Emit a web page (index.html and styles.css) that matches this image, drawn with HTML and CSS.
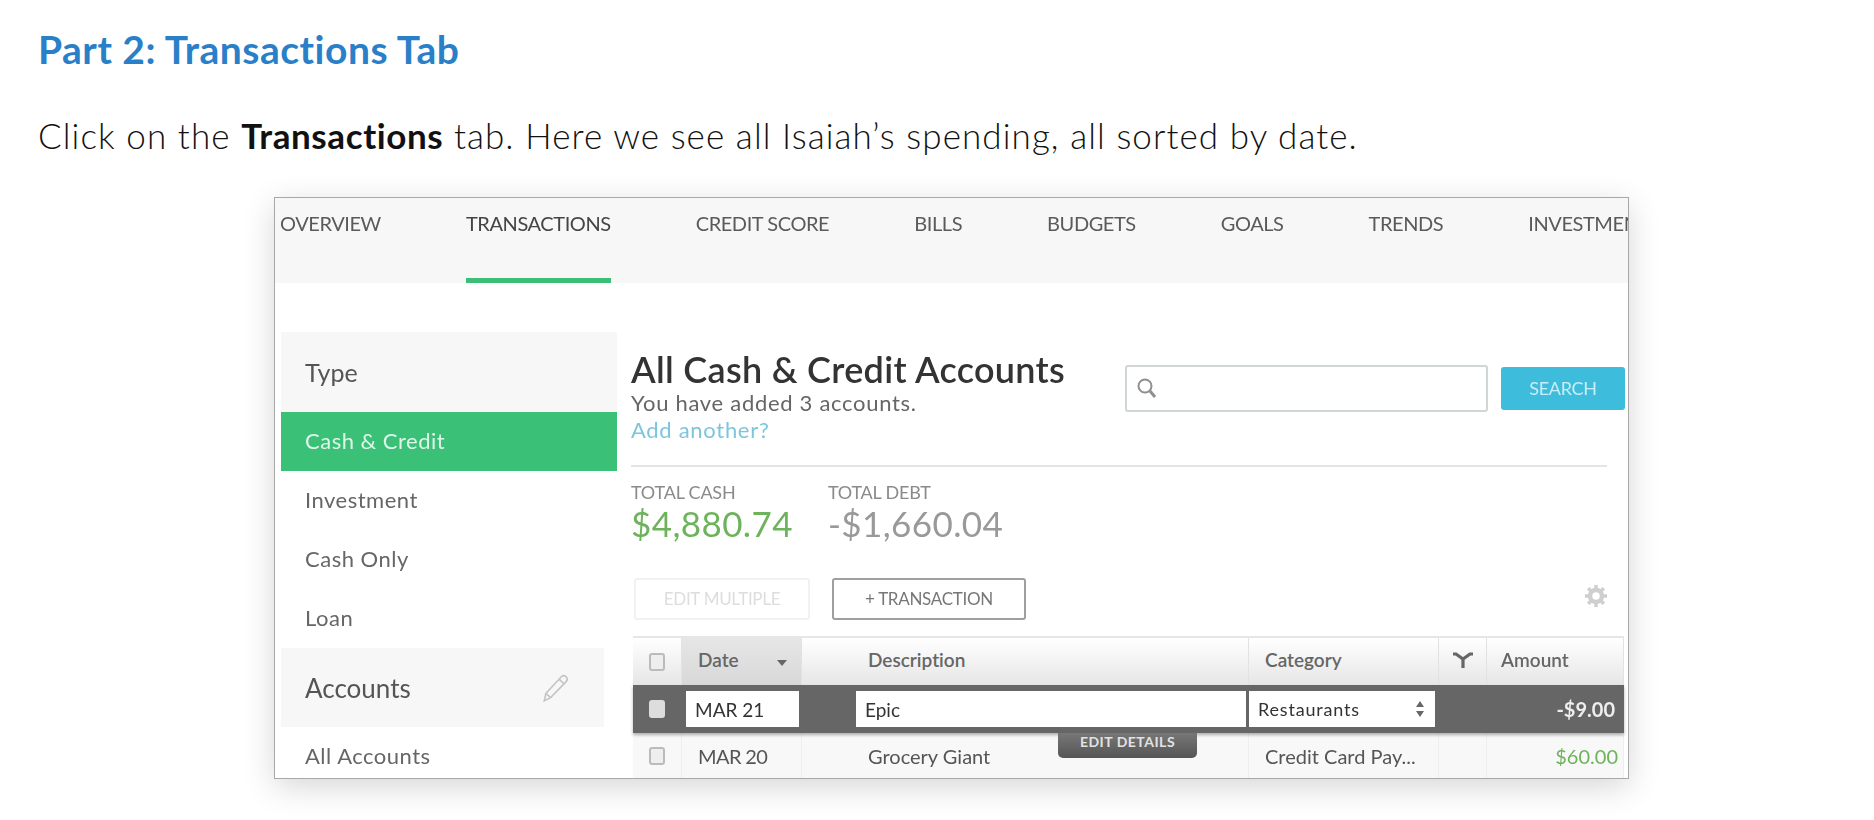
FILE: index.html
```html
<!DOCTYPE html>
<html lang="en">
<head>
    <meta charset="UTF-8">
    <title>Part 2: Transactions Tab</title>
    <link rel="stylesheet" href="styles.css">
</head>
<body>
    <h1 class="title">Part 2: Transactions Tab</h1>
    <p class="intro">Click on the <b>Transactions</b> tab. Here we see all Isaiah’s spending, all sorted by date.</p>

    <div class="shot">
        <div class="nav">
            <a>OVERVIEW</a>
            <a class="on">TRANSACTIONS</a>
            <a>CREDIT SCORE</a>
            <a>BILLS</a>
            <a>BUDGETS</a>
            <a>GOALS</a>
            <a>TRENDS</a>
            <a>INVESTMENTS</a>
        </div>

        <div class="body">
            <div class="side">
                <div class="side-head">Type</div>
                <div class="side-item ac">Cash &amp; Credit</div>
                <div class="side-item">Investment</div>
                <div class="side-item">Cash Only</div>
                <div class="side-item">Loan</div>
                <div class="side-head accounts">
                    Accounts
                    <svg class="pencil" width="32" height="32" viewBox="0 0 30 30" fill="none" stroke="#c4c4c4" stroke-width="1.5"><path d="M4 27l1.500-7L20 4.500c1.500-1.500 3-1.500 4.500 0s1.500 3 0 4.500L10 24z"/><path d="M5.500 20l4.500 4M18 7l5 4.500"/></svg>
                </div>
                <div class="side-item">All Accounts</div>
            </div>

            <div class="main">
                <div class="head">
                    <div class="head-text">
                        <h2>All Cash &amp; Credit Accounts</h2>
                        <div class="sub">You have added 3 accounts.</div>
                        <a class="add">Add another?</a>
                    </div>
                    <div class="search">
                        <div class="search-box">
                            <svg width="24" height="24" viewBox="0 0 24 24" fill="none" stroke="#8f8f8f"><circle cx="10" cy="10" r="6.500" stroke-width="2"/><path d="M15 15l5 6" stroke-width="3"/></svg>
                        </div>
                        <div class="search-btn">SEARCH</div>
                    </div>
                </div>

                <div class="totals">
                    <div class="total">
                        <span>TOTAL CASH</span>
                        <strong class="green">$4,880.74</strong>
                    </div>
                    <div class="total">
                        <span>TOTAL DEBT</span>
                        <strong>-$1,660.04</strong>
                    </div>
                </div>

                <div class="tools">
                    <div class="btn off">EDIT MULTIPLE</div>
                    <div class="btn">+ TRANSACTION</div>
                    <svg class="gear" width="24" height="24" viewBox="0 0 24 24" fill="none" stroke="#cfcfcf"><circle cx="12" cy="12" r="6" stroke-width="4.500"/><path d="M12 1v5M12 18v5M1 12h5M18 12h5M4.200 4.200l3.500 3.500M16.300 16.300l3.500 3.500M4.200 19.800l3.500-3.500M16.300 7.700l3.500-3.500" stroke-width="3.500"/></svg>
                </div>

                <div class="table">
                    <div class="row th">
                        <div class="cell"><i class="check"></i></div>
                        <div class="cell date">Date<i class="caret"></i></div>
                        <div class="cell desc">Description</div>
                        <div class="cell">Category</div>
                        <div class="cell center">
                            <svg width="22" height="18" viewBox="0 0 22 18" fill="none" stroke="#666" stroke-width="3.200"><path d="M1 3h3l7 5 7-5h3M11 7v10"/></svg>
                        </div>
                        <div class="cell amount-head">Amount</div>
                    </div>

                    <div class="row edit">
                        <div class="cell"><i class="check"></i></div>
                        <div class="cell"><div class="input">MAR 21</div></div>
                        <div class="cell desc"><div class="input">Epic</div></div>
                        <div class="cell">
                            <div class="input select">
                                <span>Restaurants</span>
                                <svg width="10" height="20" viewBox="0 0 10 20" fill="#666"><path d="M5 2l4 6H1zM5 18l4-6H1z"/></svg>
                            </div>
                        </div>
                        <div class="cell"></div>
                        <div class="cell amount">-$9.00</div>
                    </div>

                    <div class="row td">
                        <div class="cell"><i class="check"></i></div>
                        <div class="cell when">MAR 20</div>
                        <div class="cell desc">Grocery Giant</div>
                        <div class="cell">Credit Card Pay...</div>
                        <div class="cell"></div>
                        <div class="cell amount green">$60.00</div>
                    </div>

                    <div class="tip">EDIT DETAILS</div>
                </div>
            </div>
        </div>
    </div>
</body>
</html>
```

FILE: styles.css
```css
*{margin:0;padding:0;box-sizing:border-box;}
body{background:#fff;font-family:"Lato","Open Sans",sans-serif;font-variant-ligatures:none;width:1874px;height:820px;overflow:hidden;}

.title{font-size:39px;line-height:44px;font-weight:700;color:#2a7fc9;padding:27px 0 0 38px;letter-spacing:.5px;}
.intro{font-size:35px;line-height:44px;color:#111;padding:42px 0 0 38px;letter-spacing:1.08px;font-weight:300;}
.intro b{font-weight:700;letter-spacing:.6px;}

.shot{width:1355px;height:582px;margin:40px 0 0 274px;border:1px solid #a8a8a8;box-shadow:0 8px 30px rgba(0,0,0,.16);overflow:hidden;filter:blur(.5px);color:#555;}

.nav{height:85px;background:#f7f7f7;display:flex;gap:85px;padding:0 0 0 5px;font-size:20px;letter-spacing:-.42px;white-space:nowrap;}
.nav a{display:block;height:85px;line-height:50px;color:#5a5a5a;}
.nav .on{border-bottom:5px solid #3bbf78;color:#444;}

.body{display:flex;padding:49px 4px 0 6px;}

.side{width:336px;flex:none;font-size:22px;}
.side-head{height:80px;background:#f7f7f7;font-size:25px;line-height:80px;padding-left:24px;}
.side-item{height:59px;line-height:57px;padding-left:24px;letter-spacing:.5px;color:#666;}
.side-item.ac{background:#3bc078;color:#dff5e9;}
.accounts{width:323px;display:flex;align-items:center;justify-content:space-between;padding-right:32px;height:79px;color:#555;font-size:26px;}
.pencil{display:block;}

.main{flex:1;padding-left:14px;}
.head{height:135px;display:flex;justify-content:space-between;padding-top:15px;border-bottom:2px solid #e4e4e4;margin-right:17px;}
.head h2{font-size:36px;line-height:44px;font-weight:600;color:#333;letter-spacing:.3px;white-space:nowrap;}
.sub{font-size:22px;line-height:24px;color:#666;letter-spacing:.7px;}
.add{display:block;font-size:22px;line-height:30px;color:#7cc6dc;letter-spacing:.7px;}

.search{display:flex;gap:13px;margin-right:-18px;align-items:flex-start;padding-top:18px;}
.search-box{width:363px;height:47px;border:2px solid #cfd6d4;border-radius:3px;padding:9px 0 0 8px;}
.search-box svg{display:block;}
.search-btn{width:124px;height:43px;background:#3dbcdc;border-radius:3px;color:#c9edf6;font-size:18px;line-height:43px;text-align:center;letter-spacing:-.3px;margin-top:2px;}

.totals{display:flex;gap:35px;padding-top:15px;height:111px;}
.total span{display:block;font-size:18px;line-height:20px;color:#8a8a8a;letter-spacing:-.2px;}
.total strong{display:block;font-size:35px;line-height:42px;font-weight:400;color:#999;letter-spacing:.4px;}
.green{color:#6db35c !important;}

.tools{display:flex;align-items:flex-start;gap:22px;height:58px;padding-left:3px;}
.btn{width:194px;height:42px;border:2px solid #9f9f9f;border-radius:3px;font-size:17px;line-height:38px;text-align:center;color:#777;letter-spacing:-.3px;}
.btn.off{width:176px;border-color:#f1f1f1;color:#ddd;}
.gear{margin:6px 16px 0 auto;}

.table{position:relative;margin-left:2px;width:991px;}
.row{display:grid;grid-template-columns:49px 120px 447px 190px 48px 137px;}
.cell{display:flex;align-items:center;padding-left:16px;font-size:20px;white-space:nowrap;}
.desc{padding-left:66px;}
.center{padding-left:0;justify-content:center;}
.when{letter-spacing:-.6px;}

.th{height:49px;border-top:2px solid #e6e6e6;background:linear-gradient(#fff,#e6e6e6);}
.th .cell{border-right:1px solid #e2e2e2;font-weight:600;font-size:19px;padding-bottom:4px;color:#666;}
.th .cell.date{background:linear-gradient(#e6e6e6,#d8d8d8);}
.th .cell:first-child{padding-bottom:0;}
.th .amount-head{padding-left:14px;}
.caret{border:5px solid transparent;border-top:6px solid #666;border-bottom:0;margin-left:38px;margin-top:6px;}

.check{width:16px;height:18px;border:2px solid #bbb;border-radius:3px;background:#eee;display:block;}

.edit{height:48px;background:#666;box-shadow:0 2px 3px rgba(0,0,0,.3);position:relative;}
.edit .cell{padding-left:0;align-items:center;}
.edit .cell:first-child{padding-left:16px;}
.edit .check{border-color:#ddd;background:#ddd;}
.input{height:36px;background:#fff;color:#333;line-height:38px;padding-left:9px;font-size:19px;}
.edit .cell:nth-child(2) .input{width:113px;margin-left:4px;}
.edit .desc{padding-left:54px;}
.edit .desc .input{width:390px;}
.select{width:186px;display:flex;align-items:center;justify-content:space-between;padding-right:10px;font-size:18px;letter-spacing:.8px;}
.amount{justify-content:flex-end;padding-right:9px;font-weight:700;color:#eee;}
.td .amount{font-weight:400;padding-right:5px;}

.td{height:46px;background:#f8f8f8;}
.td .cell{border-right:1px solid #eee;}

.tip{position:absolute;left:425px;top:97px;width:139px;height:25px;background:linear-gradient(#777,#555);border-radius:0 0 5px 5px;color:#e2e2e2;font-size:14px;font-weight:700;line-height:18px;text-align:center;letter-spacing:.5px;}
```
